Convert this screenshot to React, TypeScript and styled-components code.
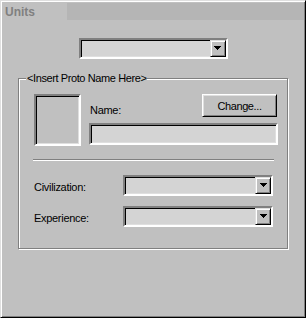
import React from "react";
import styled, { createGlobalStyle } from "styled-components";

const GlobalStyle = createGlobalStyle`
  html, body {
    margin: 0;
    padding: 0;
    background: #c0c0c0;
  }
  body {
    font-family: "Liberation Sans", Arial, sans-serif;
    font-size: 11px;
    color: #000;
  }
`;

const App = () => {
  return (
    <>
      <GlobalStyle />
      <Window>
        <TitleRow>
          <Tab>Units</Tab>
          <TabBand />
        </TitleRow>
        <Body>
          <TopCombo width={149}>
            <ComboButton>
              <Arrow />
            </ComboButton>
          </TopCombo>
          <Group>
            <Legend>&lt;Insert Proto Name Here&gt;</Legend>
            <ProtoRow>
              <ImageBox />
              <ProtoInfo>
                <NameRow>
                  <Label>Name:</Label>
                  <Button>Change...</Button>
                </NameRow>
                <TextField />
              </ProtoInfo>
            </ProtoRow>
            <Separator />
            <FieldRow first>
              <RowLabel>Civilization:</RowLabel>
              <Combo width={150}>
                <ComboButton>
                  <Arrow />
                </ComboButton>
              </Combo>
            </FieldRow>
            <FieldRow>
              <RowLabel>Experience:</RowLabel>
              <Combo width={150}>
                <ComboButton>
                  <Arrow />
                </ComboButton>
              </Combo>
            </FieldRow>
          </Group>
        </Body>
      </Window>
    </>
  );
};

export default App;

const Arrow = () => (
  <svg width="7" height="4" viewBox="0 0 7 4">
    <path d="M0 0h7v1H0zM1 1h5v1H1zM2 2h3v1H2zM3 3h1v1H3z" fill="#000" />
  </svg>
);

const Window = styled.div`
  width: 306px;
  height: 318px;
  box-sizing: border-box;
  padding: 1px;
  border: 1px solid;
  border-color: #dfdfdf #000 #000 #dfdfdf;
  box-shadow: inset 1px 1px 0 #fff, inset -1px -1px 0 #808080;
  background: #c0c0c0;
  display: flex;
  flex-direction: column;
`;

const TitleRow = styled.div`
  display: flex;
  height: 18px;
`;

const Tab = styled.div`
  width: 65px;
  box-sizing: border-box;
  padding: 3px 0 0 3px;
  font-size: 12px;
  line-height: 14px;
  font-weight: 700;
  color: #808080;
`;

const TabBand = styled.div`
  flex: 1;
  margin-top: 1px;
  height: 17px;
  background: #b5b5b5;
`;

const Body = styled.div`
  display: flex;
  flex-direction: column;
  padding-top: 18px;
`;

const Combo = styled.div<{ width: number }>`
  width: ${(p) => p.width}px;
  height: 21px;
  box-sizing: border-box;
  border: 2px solid;
  border-color: #808080 #fff #fff #808080;
  box-shadow: inset 1px 1px 0 #000, inset -1px -1px 0 #dfdfdf;
  background: #d4d4d4;
  display: flex;
  justify-content: flex-end;
`;

const TopCombo = styled(Combo)`
  align-self: center;
`;

const ComboButton = styled.div`
  width: 16px;
  height: 17px;
  box-sizing: border-box;
  border: 1px solid;
  border-color: #dfdfdf #000 #000 #dfdfdf;
  box-shadow: inset 1px 1px 0 #fff, inset -1px -1px 0 #808080;
  background: #c0c0c0;
  display: flex;
  align-items: center;
  justify-content: center;
  padding-bottom: 1px;
`;

const Group = styled.fieldset`
  margin: 13px 0 0 16px;
  width: 270px;
  min-width: 0;
  box-sizing: border-box;
  padding: 10px 9px 21px 15px;
  border: 1px solid #808080;
  box-shadow: inset 1px 1px 0 #fff, 1px 1px 0 #fff;
  display: flex;
  flex-direction: column;
`;

const Legend = styled.legend`
  margin-left: -8px;
  padding: 0 1px;
  line-height: 12px;
  letter-spacing: -0.4px;
  background: #c0c0c0;
`;

const ProtoRow = styled.div`
  display: flex;
  gap: 8px;
`;

const ImageBox = styled.div`
  width: 47px;
  height: 52px;
  box-sizing: border-box;
  border: 2px solid;
  border-color: #808080 #fff #fff #808080;
  box-shadow: inset 1px 1px 0 #000, inset -1px -1px 0 #dfdfdf;
  background: #c0c0c0;
`;

const ProtoInfo = styled.div`
  flex: 1;
  display: flex;
  flex-direction: column;
  gap: 6px;
`;

const NameRow = styled.div`
  display: flex;
  justify-content: space-between;
  height: 23px;
`;

const Label = styled.span`
  align-self: flex-end;
  padding-left: 1px;
  line-height: 13px;
  letter-spacing: -0.3px;
`;

const Button = styled.button`
  width: 75px;
  height: 23px;
  margin-right: 1px;
  box-sizing: border-box;
  border: 1px solid;
  border-color: #fff #000 #000 #fff;
  box-shadow: inset 1px 1px 0 #dfdfdf, inset -1px -1px 0 #808080;
  background: #c0c0c0;
  font-family: "Liberation Sans", Arial, sans-serif;
  font-size: 11px;
  letter-spacing: -0.4px;
  color: #000;
  padding: 0;
`;

const TextField = styled.div`
  height: 22px;
  box-sizing: border-box;
  border: 2px solid;
  border-color: #808080 #fff #fff #808080;
  box-shadow: inset 1px 1px 0 #000, inset -1px -1px 0 #dfdfdf;
  background: #d4d4d4;
`;

const Separator = styled.div`
  margin: 13px 4px 0 -1px;
  border-top: 1px solid #808080;
  border-bottom: 1px solid #fff;
`;

const FieldRow = styled.div<{ first?: boolean }>`
  display: flex;
  align-items: center;
  margin-top: ${(p) => (p.first ? 14 : 10)}px;
  margin-right: 4px;
`;

const RowLabel = styled.span`
  width: 89px;
  letter-spacing: -0.3px;
  padding-top: 2px;
`;
